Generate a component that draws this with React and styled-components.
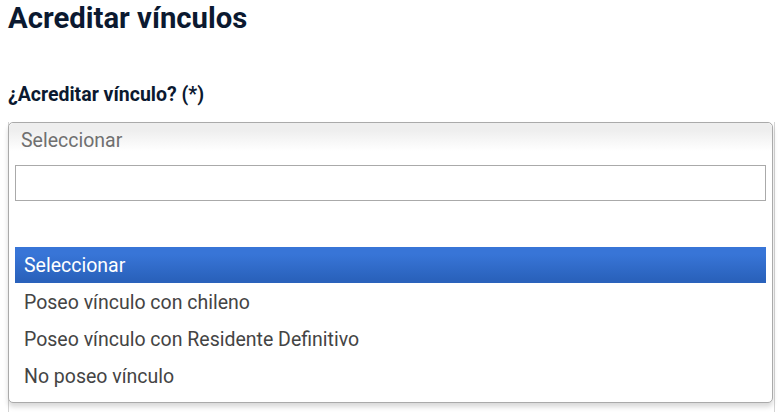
import styled, { createGlobalStyle } from 'styled-components';

const GlobalStyle = createGlobalStyle`
  body {
    margin: 0;
    background: #fff;
    font-family: Roboto, "Liberation Sans", sans-serif;
  }
`;

const Page = styled.div`
  padding: 0 8px;
`;

const Title = styled.h1`
  margin: 0;
  font-size: 29.3px;
  line-height: 36px;
  font-weight: 700;
  color: #0b1930;
`;

const Label = styled.label`
  display: block;
  margin-top: 46px;
  font-size: 19.5px;
  line-height: 26px;
  font-weight: 700;
  color: #0b1930;
`;

const Field = styled.div`
  position: relative;
  margin-top: 14px;
  height: 290px;
  border-left: 1px solid #d4d4d4;
  border-right: 1px solid #d4d4d4;
  width: 767px;
  box-sizing: border-box;
`;

const Chosen = styled.div`
  position: absolute;
  top: 0;
  left: -1px;
  width: 765px;
  box-sizing: border-box;
  border: 1px solid #aaa;
  border-radius: 5px;
  background: #fff;
  box-shadow: 0 4px 5px rgba(0, 0, 0, 0.15);
`;

const Single = styled.div`
  height: 35px;
  padding: 0 12px;
  display: flex;
  align-items: center;
  border-radius: 5px 5px 0 0;
  background: linear-gradient(#eee 20%, #fff 80%);
  font-size: 19.5px;
  color: #6f6f6f;
`;

const Drop = styled.div`
  padding: 7px 6px 7px;
`;

const Search = styled.input`
  display: block;
  width: 100%;
  height: 36px;
  box-sizing: border-box;
  border: 1px solid #aaa;
  outline: none;
  margin: 0;
  font-size: 18px;
  font-family: inherit;
`;

const Results = styled.ul`
  list-style: none;
  margin: 46px 0 0;
  padding: 0;
`;

const Option = styled.li`
  height: ${p => (p.$active ? '36px' : '37px')};
  margin-bottom: ${p => (p.$active ? '1px' : '0')};
  padding: 0 9px;
  display: flex;
  align-items: center;
  font-size: 19.5px;
  color: ${p => (p.$active ? '#fff' : '#444')};
  background: ${p => (p.$active ? 'linear-gradient(#3875d7 20%, #2a62bc 90%)' : 'transparent')};
`;

const options = [
  'Seleccionar',
  'Poseo vínculo con chileno',
  'Poseo vínculo con Residente Definitivo',
  'No poseo vínculo',
];

export default function App() {
  return (
    <Page>
      <GlobalStyle />
      <Title>Acreditar vínculos</Title>
      <Label>¿Acreditar vínculo? (*)</Label>
      <Field>
        <Chosen>
          <Single>Seleccionar</Single>
          <Drop>
            <Search type="text" />
            <Results>
              {options.map((o, i) => (
                <Option key={o} $active={i === 0}>{o}</Option>
              ))}
            </Results>
          </Drop>
        </Chosen>
      </Field>
    </Page>
  );
}
